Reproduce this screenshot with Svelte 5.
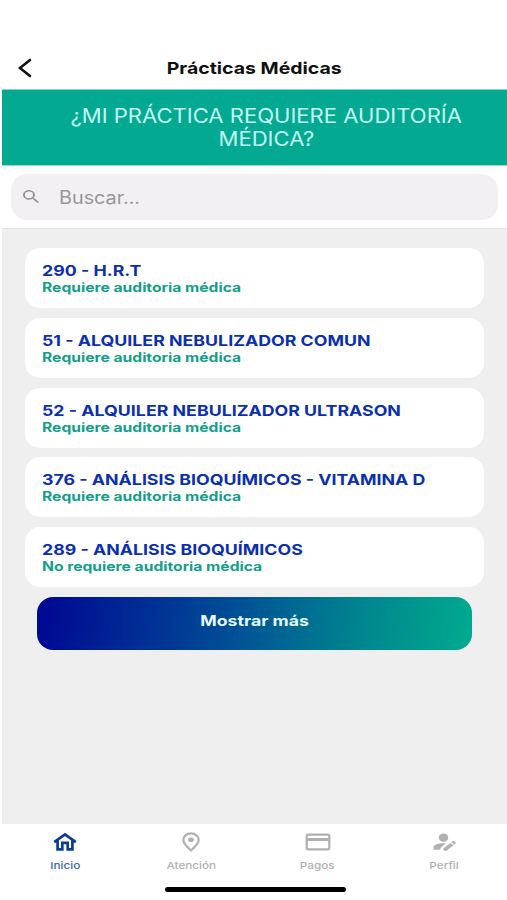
<script>
  const practices = [
    { name: '290 - H.R.T', audit: true },
    { name: '51 - ALQUILER NEBULIZADOR COMUN', audit: true },
    { name: '52 - ALQUILER NEBULIZADOR ULTRASON', audit: true },
    { name: '376 - ANÁLISIS BIOQUÍMICOS - VITAMINA D', audit: true },
    { name: '289 - ANÁLISIS BIOQUÍMICOS', audit: false }
  ];
</script>

<div class="screen">
  <header>
    <svg class="back" width="16" height="20" viewBox="0 0 16 20"><path d="M13 2 3 10l10 8" /></svg>
    <h1><span>Prácticas Médicas</span></h1>
  </header>

  <div class="banner">
    <span>¿MI PRÁCTICA REQUIERE AUDITORÍA</span>
    <span>MÉDICA?</span>
  </div>

  <div class="search-row">
    <div class="search">
      <svg width="16" height="13" viewBox="3 3 17.5 17.5" preserveAspectRatio="none"><path d="M15.5 14h-.79l-.28-.27A6.5 6.5 0 1 0 13.73 14.43l.27.28v.79l5 4.99L20.49 19zM9.5 14a4.5 4.5 0 1 1 0-9 4.5 4.5 0 0 1 0 9z" /></svg>
      <span>Buscar...</span>
    </div>
  </div>

  <main>
    {#each practices as practice}
      <article>
        <strong>{practice.name}</strong>
        <small>{practice.audit ? 'Requiere' : 'No requiere'} auditoria médica</small>
      </article>
    {/each}
    <button><span>Mostrar más</span></button>
  </main>

  <nav>
    <div class="tab active">
      <svg width="24" height="20" viewBox="0 0 24 20"><path class="line" d="M1.200 10.200 12 2.300l10.800 7.900M4.600 8.500V17.300h4.700v-6.500h5.400v6.500h4.700V8.500" /></svg>
      <span>Inicio</span>
    </div>
    <div class="tab">
      <svg width="24" height="20" viewBox="0 0 24 20"><path class="line" d="M12 18.500C8.500 15 4.300 12 4.300 8a7.700 6.600 0 0 1 15.400 0c0 4-4.200 7-7.700 10.500z" /><ellipse cx="12" cy="7.800" rx="2.900" ry="2.300" /></svg>
      <span>Atención</span>
    </div>
    <div class="tab">
      <svg width="26" height="20" viewBox="0 0 26 20"><rect class="line" x="1.700" y="2.700" width="22.600" height="14.600" rx="1.600" /><path d="M1 6h24v3H1z" /></svg>
      <span>Pagos</span>
    </div>
    <div class="tab">
      <svg width="24" height="20" viewBox="0 0 24 20"><ellipse cx="11.500" cy="5.700" rx="4.800" ry="4.100" /><path d="M1.500 17.700v-2.200c0-2.800 5.300-4.200 9.700-4.200.9 0 1.700.1 2.400.2L8.500 16v1.700zM11.500 18.700v-2.500l7-5.300 3 2.300-7 5.500zM19.400 10.200l1.400-1.100c.4-.3.900-.3 1.300 0l1.400 1.100c.4.300.4.800 0 1.100l-1.400 1.100z" /></svg>
      <span>Perfil</span>
    </div>
  </nav>
  <div class="home-bar"></div>
</div>

<style>
  :global(body) { margin: 0; background: #fff; }
  .screen {
    width: 507px; height: 900px; box-sizing: border-box; padding-left: 2px;
    display: flex; flex-direction: column; overflow: hidden; background: #fff;
    font-family: Inter, "Liberation Sans", sans-serif;
  }
  span, strong, small { display: block; white-space: nowrap; }
  header {
    height: 89px; box-sizing: border-box; padding-top: 46px; flex: none;
    display: grid; grid-template-columns: 60px 1fr 60px; align-items: center;
  }
  .back { margin-left: 15px; fill: none; stroke: #111; stroke-width: 2.6; stroke-linecap: round; }
  h1 { margin: 0; font-size: 16.5px; font-weight: 650; line-height: 20px; color: #111; display: flex; justify-content: center; }
  h1 span { transform: scaleX(1.18); }
  .banner {
    height: 77px; box-sizing: border-box; flex: none; padding: 15px 0 0 24px;
    border-top: 1px solid #7fd8c6; border-bottom: 1px solid #8fe0d2; background: #03a991;
    color: #c5fbf2; font-size: 19.5px; line-height: 23px;
    display: flex; flex-direction: column; align-items: center;
  }
  .banner span { transform: scaleX(1.13); }
  .search-row { height: 63px; flex: none; box-sizing: border-box; padding: 8px 9px 0; border-bottom: 1px solid #e5e5e6; }
  .search { height: 46px; border-radius: 16px; background: #f2f0f3; display: flex; align-items: center; padding-left: 12px; }
  .search svg { fill: #929196; margin-top: -1px; }
  .search span { margin-left: 20px; color: #98979c; font-size: 18px; transform: scaleX(1.1); transform-origin: left; }
  main { flex: 1; background: #efefef; padding: 19.4px 23px 0; display: flex; flex-direction: column; }
  article {
    height: 60px; margin-bottom: 9.7px; flex: none; box-sizing: border-box; border-radius: 15px;
    background: #fff; padding: 14px 0 0 17px;
  }
  strong { width: max-content; font-size: 14.5px; font-weight: 650; line-height: 17px; color: #0b2fb0; transform: scaleX(1.225); transform-origin: left; }
  small { width: max-content; font-size: 12.5px; font-weight: 650; line-height: 17px; color: #129f88; transform: scaleX(1.25); transform-origin: left; }
  button {
    height: 53px; flex: none; margin: 0 11.8px; border: 0; padding: 0 0 6px; border-radius: 16px;
    background: linear-gradient(97deg, #000b93 3%, #004996 42%, #00828f 72%, #00a88f 98%);
    display: flex; align-items: center; justify-content: center;
    color: #e4fbff; font-family: inherit; font-size: 14.5px; font-weight: 650;
  }
  button span { transform: scaleX(1.22); }
  nav { height: 63px; flex: none; display: flex; }
  .tab { width: 126.5px; display: flex; flex-direction: column; align-items: center; padding-top: 8px; color: #b0b0b0; }
  .tab svg { fill: currentColor; }
  .tab .line { fill: none; stroke: currentColor; stroke-width: 2.2; stroke-linejoin: round; }
  .active .line { stroke-width: 2.7; stroke-linejoin: miter; }
  .tab span { font-size: 9.6px; line-height: 14px; margin-top: 7px; font-weight: 500; transform: scaleX(1.22); }
  .active { color: #0b3c91; }
  .active span { color: #3f65ad; }
  .home-bar { width: 181px; height: 5px; border-radius: 3px; background: #000; flex: none; margin: 0 0 8px 162.5px; }
</style>
